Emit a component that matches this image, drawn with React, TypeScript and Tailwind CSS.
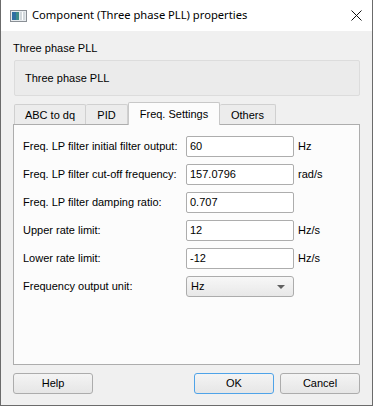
import React from "react";

const ui = { fontFamily: '"Liberation Sans", Arial, sans-serif' };
const title = { fontFamily: '"Noto Sans", "Liberation Sans", sans-serif' };

function Field({ label, value, unit }: { label: string; value: string; unit?: string }) {
  return (
    <div className="flex items-center h-[21px]">
      <div className="w-[163px] text-[11px] text-black leading-none">{label}</div>
      <div className="w-[108px] h-[21px] border border-[#adadad] rounded-[2px] bg-white flex items-center pl-[3px] text-[11px] text-black">
        {value}
      </div>
      {unit && <div className="ml-[4px] text-[11px] text-black">{unit}</div>}
    </div>
  );
}

function Btn({ children, primary }: { children: React.ReactNode; primary?: boolean }) {
  return (
    <div
      className={
        "w-[80px] h-[21px] rounded-[3px] flex items-center justify-center text-[11px] text-black bg-gradient-to-b from-[#f4f4f4] to-[#e6e6e6] border " +
        (primary ? "border-[#4fa3e8]" : "border-[#acacac]")
      }
    >
      {children}
    </div>
  );
}

export default function App() {
  return (
    <div className="w-[373px] h-[406px] bg-[#f0f0f0] border-x border-b border-[#6b6b6b] flex flex-col" style={ui}>
      <div className="h-[31px] bg-white flex items-center shrink-0">
        <svg width="17" height="12" viewBox="0 0 17 12" className="ml-[9px]">
          <rect x="0.5" y="0.5" width="16" height="11" fill="#e8ecef" stroke="#8a8f95" />
          <rect x="2" y="2" width="7" height="8" fill="#3f8c8a" />
          <rect x="2" y="2" width="4" height="8" fill="#2f6fa3" />
          <rect x="10" y="2" width="5" height="8" fill="#d2d8dc" />
          <rect x="12" y="2" width="1" height="8" fill="#ffffff" />
        </svg>
        <span className="ml-[5px] text-[11.2px] text-black" style={title}>
          Component (Three phase PLL) properties
        </span>
        <div className="ml-auto mr-[10px] w-[11px] h-[11px] relative">
          <svg width="11" height="11" viewBox="0 0 11 11">
            <path d="M0.5 0.5 L10.5 10.5 M10.5 0.5 L0.5 10.5" stroke="#111" strokeWidth="1" />
          </svg>
        </div>
      </div>

      <div className="px-[12px] flex flex-col flex-1">
        <div className="pt-[11px] h-[23px] text-[11px] text-black leading-[12px]">Three phase PLL</div>
        <div className="mt-[6px] ml-[1px] h-[36px] bg-[#ebebeb] border border-[#dcdcdc] rounded-[2px] flex items-center pl-[10px] text-[11px] text-black">
          Three phase PLL
        </div>

        <div className="mt-[6px] flex items-end h-[22px] relative z-10">
          <div className="ml-[1px] w-[72px] h-[20px] border border-b-0 border-[#d0d0d0] bg-[#ececec] rounded-t-[2px] flex items-center justify-center text-[11px] text-black pt-[2px]">
            ABC to dq
          </div>
          <div className="w-[42px] h-[20px] border border-b-0 border-l-0 border-[#d0d0d0] bg-[#ececec] rounded-t-[2px] flex items-center justify-center text-[11px] text-black pt-[2px]">
            PID
          </div>
          <div className="w-[92px] h-[23px] -mb-[1px] border border-b-0 border-[#c8c8c8] bg-[#fcfcfc] rounded-t-[2px] flex items-center justify-center text-[11px] text-black pt-[1px]">
            Freq. Settings
          </div>
          <div className="w-[56px] h-[20px] border border-b-0 border-l-0 border-[#d0d0d0] bg-[#ececec] rounded-t-[2px] flex items-center justify-center text-[11px] text-black pt-[2px]">
            Others
          </div>
        </div>
        <div className="h-[241px] bg-[#fcfcfc] border border-[#adadad] pl-[9px] pt-[11px] flex flex-col gap-[7px]">
          <Field label="Freq. LP filter initial filter output:" value="60" unit="Hz" />
          <Field label="Freq. LP filter cut-off frequency:" value="157.0796" unit="rad/s" />
          <Field label="Freq. LP filter damping ratio:" value="0.707" />
          <Field label="Upper rate limit:" value="12" unit="Hz/s" />
          <Field label="Lower rate limit:" value="-12" unit="Hz/s" />
          <div className="flex items-center h-[21px]">
            <div className="w-[163px] text-[11px] text-black">Frequency output unit:</div>
            <div className="w-[108px] h-[21px] border border-[#acacac] rounded-[3px] bg-gradient-to-b from-[#f7f7f7] to-[#e8e8e8] flex items-center pl-[4px] pr-[8px] text-[11px] text-black">
              <span>Hz</span>
              <svg width="8" height="4" viewBox="0 0 8 4" className="ml-auto">
                <path d="M0 0 H8 L4 4 Z" fill="#606060" />
              </svg>
            </div>
          </div>
        </div>

        <div className="mt-[8px] flex">
          <Btn>Help</Btn>
          <div className="ml-auto flex gap-[6px]">
            <Btn primary>OK</Btn>
            <Btn>Cancel</Btn>
          </div>
        </div>
      </div>
    </div>
  );
}
